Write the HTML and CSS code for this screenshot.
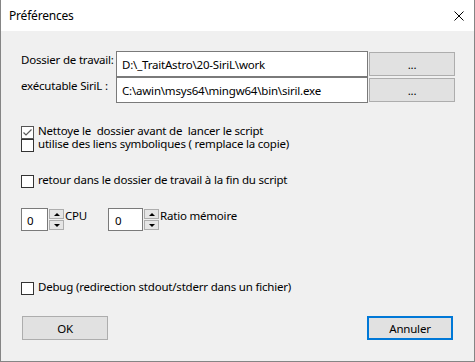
FILE: index.html
```html
<!DOCTYPE html>
<html lang="fr">
<head>
    <meta charset="UTF-8">
    <title>Préférences</title>
    <link rel="stylesheet" href="styles.css">
</head>
<body>
    <div class="window">
        <div class="titlebar">
            <span class="title">Préférences</span>
            <svg class="close" width="10" height="10" viewBox="0 0 10 10">
                <path d="M0.5 0.5L9.5 9.5M9.5 0.5L0.5 9.5" stroke="#000" stroke-width="1"/>
            </svg>
        </div>
        <div class="content">
            <div class="paths">
                <label class="path-label" for="workdir">Dossier de travail:</label>
                <input class="path-input" id="workdir" type="text" value="D:\_TraitAstro\20-SiriL\work">
                <button class="btn browse">...</button>
                <label class="path-label" for="exe">exécutable SiriL :</label>
                <input class="path-input" id="exe" type="text" value="C:\awin\msys64\mingw64\bin\siril.exe">
                <button class="btn browse">...</button>
            </div>

            <div class="checks">
                <div class="check">
                    <span class="box checked">
                        <svg width="11" height="11" viewBox="0 0 11 11">
                            <path d="M1.5 5.5L4 8L9.5 2.5" fill="none" stroke="#5a5a5a" stroke-width="1.2"/>
                        </svg>
                    </span>
                    <span class="check-text">Nettoye le  dossier avant de  lancer le script</span>
                </div>
                <div class="check">
                    <span class="box"></span>
                    <span class="check-text">utilise des liens symboliques ( remplace la copie)</span>
                </div>
            </div>

            <div class="check single">
                <span class="box"></span>
                <span class="check-text">retour dans le dossier de travail à la fin du script</span>
            </div>

            <div class="spins">
                <div class="spin-group first">
                    <div class="spin-field small">0</div>
                    <div class="spin-buttons">
                        <span class="spin-btn"><i class="arrow up"></i></span>
                        <span class="spin-btn"><i class="arrow down"></i></span>
                    </div>
                    <span class="spin-label">CPU</span>
                </div>
                <div class="spin-group">
                    <div class="spin-field wide">0</div>
                    <div class="spin-buttons">
                        <span class="spin-btn"><i class="arrow up"></i></span>
                        <span class="spin-btn"><i class="arrow down"></i></span>
                    </div>
                    <span class="spin-label">Ratio mémoire</span>
                </div>
            </div>

            <div class="check debug">
                <span class="box"></span>
                <span class="check-text">Debug (redirection stdout/stderr dans un fichier)</span>
            </div>

            <div class="actions">
                <button class="btn action ok">OK</button>
                <button class="btn action default">Annuler</button>
            </div>
        </div>
    </div>
</body>
</html>
```

FILE: styles.css
```css
html, body {
    margin: 0;
    padding: 0;
}
body {
    font-family: "Noto Sans", "Open Sans", sans-serif;
    font-size: 11.5px;
    letter-spacing: -0.2px;
    color: #000;
    background: #f0f0f0;
}
.window {
    width: 475px;
    height: 362px;
    box-sizing: border-box;
    border: 1px solid #858585;
    border-top: none;
    background: #f0f0f0;
    overflow: hidden;
}
.titlebar {
    height: 31px;
    background: #fff;
    display: flex;
    align-items: center;
    justify-content: space-between;
    padding: 0 10px 0 8px;
}
.title {
    font-size: 12px;
    line-height: 16px;
}
.content {
    padding: 20px 20px 0 20px;
}

/* path rows */
.paths {
    display: grid;
    grid-template-columns: 94px 252px 86px;
    grid-auto-rows: 26px;
    column-gap: 1px;
}
.path-label {
    line-height: 16px;
    padding-top: 1px;
    white-space: nowrap;
}
.path-input {
    width: 100%;
    height: 26px;
    box-sizing: border-box;
    border: 1px solid #7a7a7a;
    background: #fff;
    font-family: inherit;
    font-size: 11.5px;
    letter-spacing: -0.2px;
    padding: 0 5px;
    margin: 0;
    color: #000;
    outline: none;
}
.btn {
    font-family: inherit;
    font-size: 11.5px;
    letter-spacing: -0.2px;
    color: #000;
    background: #e1e1e1;
    border: 1px solid #adadad;
    padding: 0;
    margin: 0;
    box-sizing: border-box;
}
.browse {
    height: 24px;
    align-self: center;
}

/* checkboxes */
.checks {
    margin-top: 23px;
}
.check {
    display: flex;
    align-items: flex-start;
    height: 13px;
}
.box {
    width: 13px;
    height: 13px;
    box-sizing: border-box;
    border: 1px solid #333;
    background: #fff;
    flex: none;
    display: flex;
    align-items: center;
    justify-content: center;
}
.box.checked {
    border-color: #555;
}
.check-text {
    margin-left: 4px;
    margin-top: -2px;
    line-height: 13px;
    white-space: pre;
}
.single {
    margin-top: 23px;
}

/* spin boxes */
.spins {
    display: flex;
    margin-top: 20px;
    height: 23px;
}
.spin-group {
    display: flex;
    align-items: flex-start;
}
.spin-group.first {
    width: 87px;
}
.spin-field {
    height: 23px;
    box-sizing: border-box;
    border: 1px solid #7a7a7a;
    background: #fff;
    line-height: 21px;
    padding-left: 5px;
    padding-top: 1px;
}
.spin-field.small {
    width: 27px;
}
.spin-field.wide {
    width: 35px;
    padding-left: 6px;
}
.spin-buttons {
    display: flex;
    flex-direction: column;
    gap: 1px;
    margin: 1px 0 0 1px;
}
.spin-btn {
    width: 15px;
    height: 10px;
    box-sizing: border-box;
    background: #e5e5e5;
    border: 1px solid #adadad;
    display: flex;
    align-items: center;
    justify-content: center;
}
.arrow {
    width: 0;
    height: 0;
    border-left: 3px solid transparent;
    border-right: 3px solid transparent;
}
.arrow.up {
    border-bottom: 3px solid #000;
}
.arrow.down {
    border-top: 3px solid #000;
}
.spin-label {
    margin-left: 1px;
    line-height: 16px;
}

.debug {
    margin-top: 51px;
}

/* bottom buttons */
.actions {
    display: flex;
    justify-content: space-between;
    margin-top: 21px;
    padding: 0 1px 0 1px;
}
.action {
    width: 86px;
    height: 24px;
}
.default {
    border: 2px solid #0078d7;
}
```
